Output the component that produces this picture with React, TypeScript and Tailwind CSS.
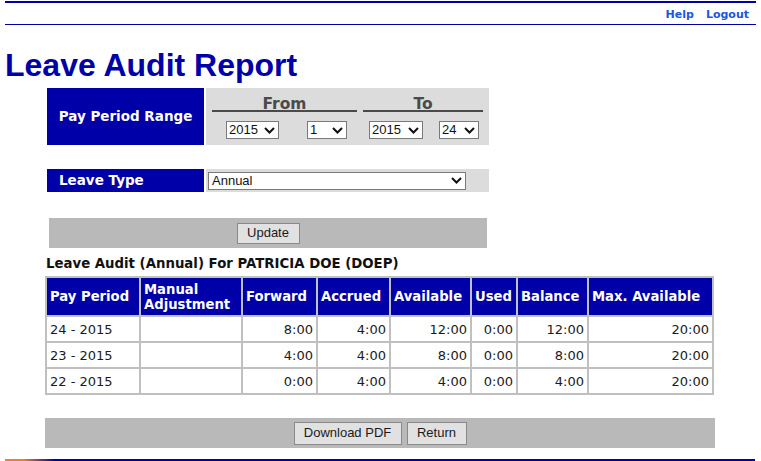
import React from "react";

const BLUE = "bg-[#0000a8]";

function Chevron() {
  return (
    <svg width="11" height="7" viewBox="0 0 11 7" className="shrink-0">
      <polyline points="1,1 5.5,5.5 10,1" fill="none" stroke="#111" strokeWidth="2" />
    </svg>
  );
}

function FakeSelect({ value, w }: { value: string; w: string }) {
  return (
    <div
      className={`${w} h-[18px] bg-white border border-[#7a7a7a] flex items-center justify-between pl-[2px] pr-[3px] font-['Liberation_Sans',Arial,sans-serif] text-[13px] leading-[16px] text-[#111]`}
    >
      <span>{value}</span>
      <Chevron />
    </div>
  );
}

const rows = [
  ["24 - 2015", "", "8:00", "4:00", "12:00", "0:00", "12:00", "20:00"],
  ["23 - 2015", "", "4:00", "4:00", "8:00", "0:00", "8:00", "20:00"],
  ["22 - 2015", "", "0:00", "4:00", "4:00", "0:00", "4:00", "20:00"],
];

export default function App() {
  return (
    <div className="w-[761px] h-[461px] bg-white overflow-hidden font-['DejaVu_Sans',Verdana,sans-serif]">
      {/* header */}
      <div className="mx-[5px] mt-[1px] h-[24px] border-t-2 border-b border-[#0000a8] flex items-center justify-end pr-[7px] pt-[1px] gap-[12px] text-[11px] font-bold text-[#2255e0] leading-[13px]">
        <span>Help</span>
        <span>Logout</span>
      </div>

      {/* title */}
      <div className="h-[63px] pt-[24px] pl-[5px] font-['Liberation_Sans',Arial,sans-serif] text-[32px] leading-[32px] font-bold text-[#0000a8]">
        Leave Audit Report
      </div>

      {/* pay period range */}
      <div className="ml-[47px] flex gap-[2px] h-[57px]">
        <div className={`${BLUE} w-[157px] flex items-center justify-center text-white font-bold text-[13.5px]`}>
          Pay Period Range
        </div>
        <div className="w-[283px] bg-[#dcdcdc] pt-[10px] pl-[6px] flex gap-[6px]">
          <div className="w-[145px] flex flex-col">
            <div className="h-[14px] border-b-2 border-[#4a4a4a] text-center text-[15.5px] leading-[12px] font-bold text-[#4a4a4a]">
              From
            </div>
            <div className="mt-[9px] flex pl-[14px]">
              <FakeSelect value="2015" w="w-[53px]" />
              <div className="ml-[28px]">
                <FakeSelect value="1" w="w-[40px]" />
              </div>
            </div>
          </div>
          <div className="w-[120px] flex flex-col">
            <div className="h-[14px] border-b-2 border-[#4a4a4a] text-center text-[15.5px] leading-[12px] font-bold text-[#4a4a4a]">
              To
            </div>
            <div className="mt-[9px] flex pl-[6px]">
              <FakeSelect value="2015" w="w-[54px]" />
              <div className="ml-[16px]">
                <FakeSelect value="24" w="w-[40px]" />
              </div>
            </div>
          </div>
        </div>
      </div>

      {/* leave type */}
      <div className="ml-[47px] mt-[24px] flex gap-[2px] h-[23px]">
        <div className={`${BLUE} w-[157px] flex items-center pl-[12px] text-white font-bold text-[13.5px]`}>
          Leave Type
        </div>
        <div className="w-[283px] bg-[#dcdcdc] flex items-center pl-[2px]">
          <div className="w-[258px] h-[18px] bg-white border border-[#7a7a7a] flex items-center justify-between pl-[3px] pr-[3px] font-['Liberation_Sans',Arial,sans-serif] text-[13px] leading-[16px] text-[#111]">
            <span>Annual</span>
            <Chevron />
          </div>
        </div>
      </div>

      {/* update bar */}
      <div className="ml-[49px] mt-[26px] w-[438px] h-[30px] bg-[#b9b9b9] flex items-center justify-center">
        <div className="w-[63px] h-[21px] bg-[#e1e1e1] border border-[#8a8a8a] flex items-center justify-center font-['Liberation_Sans',Arial,sans-serif] text-[13px] text-[#1a1a1a]">
          Update
        </div>
      </div>

      {/* table title */}
      <div className="ml-[46px] mt-[9px] h-[14px] text-[13.3px] leading-[14px] font-bold text-[#111] whitespace-nowrap">
        Leave Audit (Annual) For PATRICIA DOE (DOEP)
      </div>

      {/* table */}
      <div className="ml-[45px] mt-[5px] w-fit grid grid-cols-[92px_100px_73px_71px_79px_44px_69px_123px] gap-[2px] p-[2px] bg-[#c0c0c0]">
        {["Pay Period", "Manual Adjustment", "Forward", "Accrued", "Available", "Used", "Balance", "Max. Available"].map((h) => (
          <div
            key={h}
            className={`${BLUE} h-[37px] flex items-center pl-[3px] pr-[2px] text-white font-bold text-[13.2px] leading-[15px]`}
          >
            {h === "Manual Adjustment" ? (
              <span>
                Manual
                <br />
                Adjustment
              </span>
            ) : (
              <span className="whitespace-nowrap">{h}</span>
            )}
          </div>
        ))}
        {rows.map((r, ri) =>
          r.map((c, ci) => (
            <div
              key={`${ri}-${ci}`}
              className={`bg-white h-[24px] flex items-center text-[13px] leading-[15px] text-[#1a1a1a] ${
                ci < 2 ? "justify-start pl-[3px]" : "justify-end pr-[3px]"
              }`}
            >
              {c}
            </div>
          ))
        )}
      </div>

      {/* bottom bar */}
      <div className="ml-[45px] mt-[23px] w-[670px] h-[30px] bg-[#b9b9b9] flex items-center justify-center gap-[5px] font-['Liberation_Sans',Arial,sans-serif] text-[13px] text-[#1a1a1a]">
        <div className="w-[108px] h-[23px] bg-[#e1e1e1] border border-[#8a8a8a] flex items-center justify-center">
          Download PDF
        </div>
        <div className="w-[60px] h-[23px] bg-[#e1e1e1] border border-[#8a8a8a] flex items-center justify-center">
          Return
        </div>
      </div>

      {/* bottom line */}
      <div className="ml-[5px] mt-[11px] w-[750px] h-[2px] bg-[linear-gradient(to_right,#f08030_0px,#f08030_18px,#0000a8_50px,#0000a8_100%)]" />
    </div>
  );
}
